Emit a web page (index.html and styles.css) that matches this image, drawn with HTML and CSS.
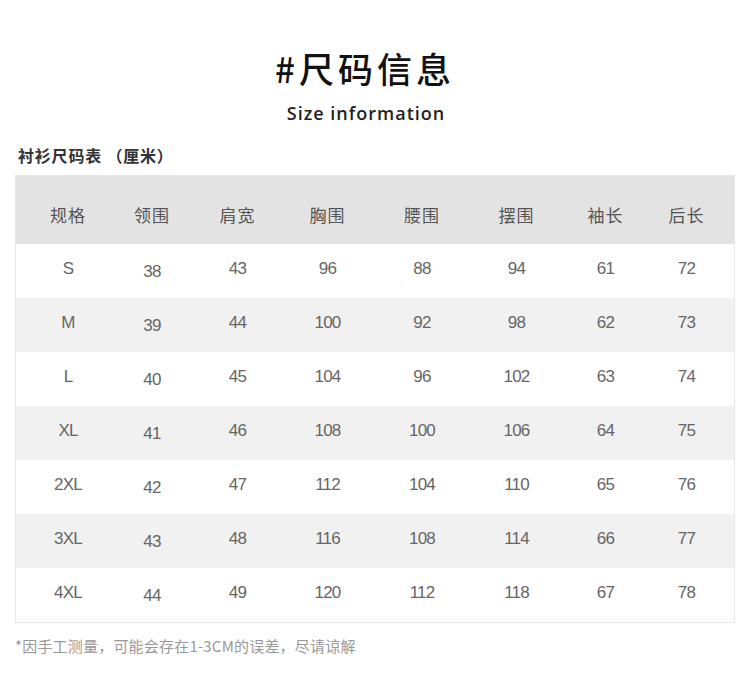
FILE: index.html
```html
<!DOCTYPE html>
<html lang="zh">
<head>
<meta charset="utf-8">
<link rel="stylesheet" href="styles.css">
</head>
<body>
<div class="page">
  <h1 class="title">#尺码信息</h1>
  <p class="subtitle">Size information</p>
  <h2 class="caption">衬衫尺码表 （厘米）</h2>
  <div class="table">
    <div class="row head">
      <div>规格</div><div>领围</div><div>肩宽</div><div>胸围</div><div>腰围</div><div>摆围</div><div>袖长</div><div>后长</div>
    </div>
    <div class="row"><div>S</div><div class="low">38</div><div>43</div><div>96</div><div>88</div><div>94</div><div>61</div><div>72</div></div>
    <div class="row alt"><div>M</div><div class="low">39</div><div>44</div><div>100</div><div>92</div><div>98</div><div>62</div><div>73</div></div>
    <div class="row"><div>L</div><div class="low">40</div><div>45</div><div>104</div><div>96</div><div>102</div><div>63</div><div>74</div></div>
    <div class="row alt"><div>XL</div><div class="low">41</div><div>46</div><div>108</div><div>100</div><div>106</div><div>64</div><div>75</div></div>
    <div class="row"><div>2XL</div><div class="low">42</div><div>47</div><div>112</div><div>104</div><div>110</div><div>65</div><div>76</div></div>
    <div class="row alt"><div>3XL</div><div class="low">43</div><div>48</div><div>116</div><div>108</div><div>114</div><div>66</div><div>77</div></div>
    <div class="row"><div>4XL</div><div class="low">44</div><div>49</div><div>120</div><div>112</div><div>118</div><div>67</div><div>78</div></div>
  </div>
  <p class="note">*因手工测量，可能会存在1-3CM的误差，尽请谅解</p>
</div>
</body>
</html>
```
FILE: styles.css
```css
* { box-sizing: border-box; }
html, body { margin: 0; padding: 0; background: #fff; }
body {
  font-family: "Noto Sans CJK SC", "Noto Sans", sans-serif;
  width: 750px;
  height: 678px;
  overflow: hidden;
}
.page {
  padding: 44px 15px 0 15px;
}
.title {
  margin: 0;
  padding-right: 20px;
  text-align: center;
  font-size: 35px;
  line-height: 48px;
  font-weight: 500;
  color: #111;
  letter-spacing: 4px;
}
.subtitle {
  margin: 8px 0 0 0;
  padding-right: 18px;
  text-align: center;
  font-family: "Open Sans", "Noto Sans", sans-serif;
  font-size: 18px;
  line-height: 26px;
  font-weight: 600;
  color: #222;
  letter-spacing: 1px;
}
.caption {
  margin: 18px 0 0 3px;
  font-size: 16px;
  line-height: 22px;
  font-weight: 700;
  color: #333;
  letter-spacing: 0.8px;
}
.table {
  margin-top: 9px;
  width: 720px;
  border: 1px solid #e6e6e6;
}
.row {
  display: grid;
  grid-template-columns: 94px 84px 87px 93px 96px 93px 85px 86px;
  height: 54px;
  padding-bottom: 4px;
  align-items: center;
  background: #fff;
  color: #666;
  font-family: "Liberation Sans", "Noto Sans CJK SC", sans-serif;
  font-size: 17px;
  letter-spacing: -0.8px;
}
.row > div { text-align: center; }
.row > div:first-child { padding-left: 10px; }
.row > div:last-child { padding-right: 9px; }
.row .low { padding-top: 6px; }
.row.alt { background: #f1f1f1; }
.row.head {
  height: 68px;
  padding-top: 9px;
  padding-bottom: 0;
  background: #e3e3e3;
  color: #555;
  font-family: "Noto Sans CJK SC", sans-serif;
  font-size: 17px;
  letter-spacing: 1px;
}
.note {
  margin: 13px 0 0 0;
  font-size: 15px;
  line-height: 20px;
  color: #999;
  letter-spacing: 0.2px;
}
```
